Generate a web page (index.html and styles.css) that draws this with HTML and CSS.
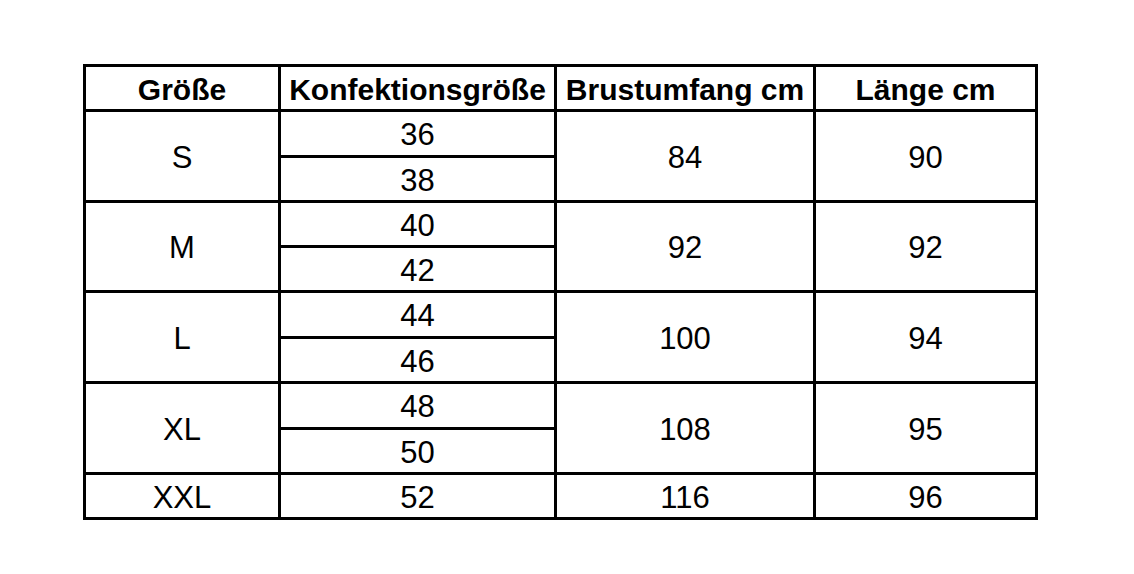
FILE: index.html
```html
<!DOCTYPE html>
<html lang="de">
<head>
<meta charset="utf-8">
<title>Größentabelle</title>
<link rel="stylesheet" href="styles.css">
</head>
<body>
<div class="size-table">
  <div class="cell head">Größe</div>
  <div class="cell head">Konfektionsgröße</div>
  <div class="cell head">Brustumfang cm</div>
  <div class="cell head">Länge cm</div>

  <div class="cell span2">S</div>
  <div class="cell">36</div>
  <div class="cell span2">84</div>
  <div class="cell span2">90</div>
  <div class="cell">38</div>

  <div class="cell span2">M</div>
  <div class="cell">40</div>
  <div class="cell span2">92</div>
  <div class="cell span2">92</div>
  <div class="cell">42</div>

  <div class="cell span2">L</div>
  <div class="cell">44</div>
  <div class="cell span2">100</div>
  <div class="cell span2">94</div>
  <div class="cell">46</div>

  <div class="cell span2">XL</div>
  <div class="cell">48</div>
  <div class="cell span2">108</div>
  <div class="cell span2">95</div>
  <div class="cell">50</div>

  <div class="cell">XXL</div>
  <div class="cell">52</div>
  <div class="cell">116</div>
  <div class="cell">96</div>
</div>
</body>
</html>
```

FILE: styles.css
```css
html, body {
  margin: 0;
  padding: 0;
  background: #fff;
}

body {
  padding: 64px 0 0 83px;
  font-family: "Liberation Sans", Arial, sans-serif;
  color: #000;
}

.size-table {
  display: grid;
  width: max-content;
  grid-template-columns: 192px 273px 256px 219px;
  grid-template-rows: 42px 43px 42px 42px 42px 43px 42px 43px 42px 42px;
  gap: 3px;
  padding: 3px;
  background: #000;
}

.cell {
  background: #fff;
  display: flex;
  align-items: center;
  justify-content: center;
  font-size: 31px;
  line-height: 1;
  white-space: nowrap;
  padding-top: 2px;
}

.head {
  font-size: 30px;
  font-weight: 700;
  padding-top: 4px;
}

.span2 {
  grid-row: span 2;
}
```
